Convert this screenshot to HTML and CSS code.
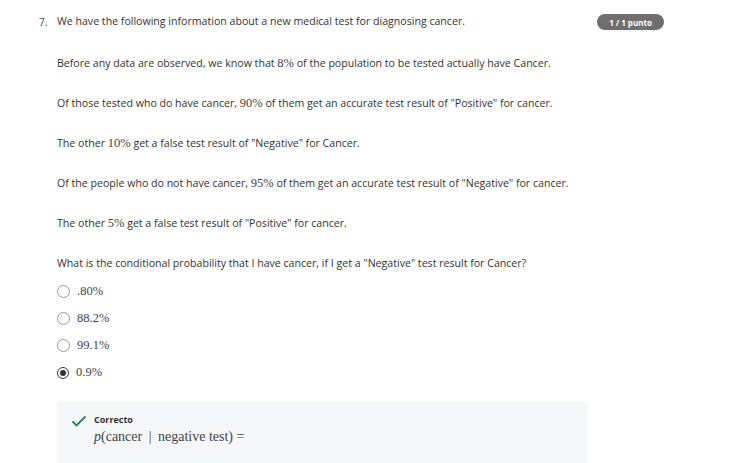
FILE: index.html
```html
<!DOCTYPE html>
<html>
<head>
<meta charset="utf-8">
<link rel="stylesheet" href="styles.css">
</head>
<body>
<div class="question">
  <div class="qnum">7.</div>
  <div class="qbody">
    <p class="line first">We have the following information about a new medical test for diagnosing cancer.</p>
    <p class="line">Before any data are observed, we know that <span class="m">8%</span> of the population to be tested actually have Cancer.</p>
    <p class="line">Of those tested who do have cancer, <span class="m">90%</span> of them get an accurate test result of "Positive" for cancer.</p>
    <p class="line">The other <span class="m">10%</span> get a false test result of "Negative" for Cancer.</p>
    <p class="line">Of the people who do not have cancer, <span class="m">95%</span> of them get an accurate test result of "Negative" for cancer.</p>
    <p class="line">The other <span class="m">5%</span> get a false test result of "Positive" for cancer.</p>
    <p class="line">What is the conditional probability that I have cancer, if I get a "Negative" test result for Cancer?</p>
    <div class="options">
      <div class="opt"><span class="radio"></span><span class="m">.80%</span></div>
      <div class="opt"><span class="radio"></span><span class="m">88.2%</span></div>
      <div class="opt"><span class="radio"></span><span class="m">99.1%</span></div>
      <div class="opt"><span class="radio checked"></span><span class="m">0.9%</span></div>
    </div>
    <div class="feedback">
      <svg class="check" width="16" height="12" viewBox="0 0 16 12"><path d="M1.5 6.5 L5.5 10.5 L14.5 1.5" fill="none" stroke="#1f8354" stroke-width="1.8"/></svg>
      <div class="fbtext">
        <div class="fbtitle">Correcto</div>
        <div class="fbmath"><i>p</i>(cancer <span class="bar">|</span> negative test) =</div>
      </div>
    </div>
  </div>
  <div class="badge">1 / 1 punto</div>
</div>
</body>
</html>
```
FILE: styles.css
```css
body {
  margin: 0;
  background: #fff;
  font-family: "Open Sans", sans-serif;
  color: #333;
}
.question {
  display: flex;
  padding: 14px 0 0 39px;
}
.qnum {
  width: 18px;
  font-size: 10px;
  padding-top: 1px;
  color: #444;
}
.qbody {
  width: 531px;
}
.line {
  margin: 0 0 25px 0;
  font-size: 10.6px;
  line-height: 15px;
  white-space: nowrap;
}
.line.first {
  margin-bottom: 27px;
}
.m {
  font-family: "Liberation Serif", "DejaVu Serif", serif;
  font-size: 12.5px;
  color: #444;
}
.options {
  display: flex;
  flex-direction: column;
  gap: 10px;
  margin-top: -13px;
}
.opt {
  display: flex;
  align-items: center;
  height: 17px;
  gap: 7px;
}
.radio {
  width: 11px;
  height: 11px;
  border: 1px solid #999;
  border-radius: 50%;
  box-sizing: content-box;
  position: relative;
}
.radio.checked {
  border: 1.5px solid #333;
  width: 10px;
  height: 10px;
}
.radio.checked::after {
  content: "";
  position: absolute;
  left: 2px;
  top: 2px;
  width: 6px;
  height: 6px;
  border-radius: 50%;
  background: #333;
}
.feedback {
  margin-top: 20px;
  background: #f5f7f8;
  height: 62px;
  display: flex;
  padding: 13px 0 0 14px;
  box-sizing: border-box;
  gap: 7px;
}
.check {
  margin-top: 1px;
}
.fbtitle {
  font-size: 9px;
  font-weight: 700;
  color: #333;
  line-height: 12px;
}
.fbmath {
  font-family: "Liberation Serif", "DejaVu Serif", serif;
  font-size: 14px;
  color: #444;
  line-height: 22px;
}
.bar {
  padding: 0 3px;
}
.badge {
  margin-left: 9px;
  margin-top: 0;
  height: 16px;
  width: 67px;
  border-radius: 8px;
  background: #6f6f6f;
  color: #fff;
  font-size: 8px;
  font-weight: 700;
  display: flex;
  align-items: center;
  justify-content: center;
}
```
